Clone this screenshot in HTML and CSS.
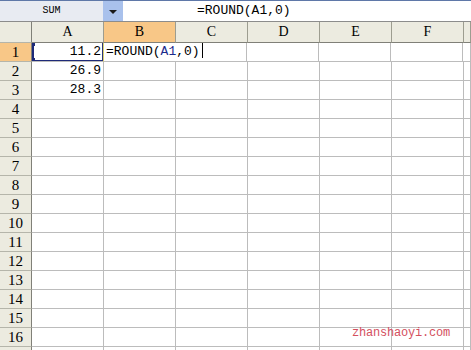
FILE: index.html
```html
<!DOCTYPE html>
<html lang="en">
<head>
    <meta charset="UTF-8">
    <title>ROUND</title>
    <link rel="stylesheet" href="styles.css">
</head>
<body>
    <div class="bar">
        <div class="namebox">SUM</div>
        <div class="drop"><span class="arrow"></span></div>
        <div class="formula">=ROUND(A1,0)</div>
    </div>
    <div class="sheet">
        <div class="row head">
            <div class="rh corner"></div><div class="ch">A</div><div class="ch sel">B</div><div class="ch">C</div><div class="ch">D</div><div class="ch">E</div><div class="ch">F</div><div class="ch last"></div>
        </div>
        <div class="row">
            <div class="rh sel">1</div>
            <div class="c num active">11.2</div>
            <div class="c edit">=ROUND(<span class="ref">A1</span>,0)<span class="caret"></span></div>
            <div class="c"></div><div class="c"></div><div class="c"></div><div class="c"></div><div class="c last"></div>
        </div>
        <div class="row"><div class="rh">2</div><div class="c num">26.9</div><div class="c"></div><div class="c"></div><div class="c"></div><div class="c"></div><div class="c"></div><div class="c last"></div></div>
        <div class="row"><div class="rh">3</div><div class="c num">28.3</div><div class="c"></div><div class="c"></div><div class="c"></div><div class="c"></div><div class="c"></div><div class="c last"></div></div>
        <div class="row"><div class="rh">4</div><div class="c"></div><div class="c"></div><div class="c"></div><div class="c"></div><div class="c"></div><div class="c"></div><div class="c last"></div></div>
        <div class="row"><div class="rh">5</div><div class="c"></div><div class="c"></div><div class="c"></div><div class="c"></div><div class="c"></div><div class="c"></div><div class="c last"></div></div>
        <div class="row"><div class="rh">6</div><div class="c"></div><div class="c"></div><div class="c"></div><div class="c"></div><div class="c"></div><div class="c"></div><div class="c last"></div></div>
        <div class="row"><div class="rh">7</div><div class="c"></div><div class="c"></div><div class="c"></div><div class="c"></div><div class="c"></div><div class="c"></div><div class="c last"></div></div>
        <div class="row"><div class="rh">8</div><div class="c"></div><div class="c"></div><div class="c"></div><div class="c"></div><div class="c"></div><div class="c"></div><div class="c last"></div></div>
        <div class="row"><div class="rh">9</div><div class="c"></div><div class="c"></div><div class="c"></div><div class="c"></div><div class="c"></div><div class="c"></div><div class="c last"></div></div>
        <div class="row"><div class="rh">10</div><div class="c"></div><div class="c"></div><div class="c"></div><div class="c"></div><div class="c"></div><div class="c"></div><div class="c last"></div></div>
        <div class="row"><div class="rh">11</div><div class="c"></div><div class="c"></div><div class="c"></div><div class="c"></div><div class="c"></div><div class="c"></div><div class="c last"></div></div>
        <div class="row"><div class="rh">12</div><div class="c"></div><div class="c"></div><div class="c"></div><div class="c"></div><div class="c"></div><div class="c"></div><div class="c last"></div></div>
        <div class="row"><div class="rh">13</div><div class="c"></div><div class="c"></div><div class="c"></div><div class="c"></div><div class="c"></div><div class="c"></div><div class="c last"></div></div>
        <div class="row"><div class="rh">14</div><div class="c"></div><div class="c"></div><div class="c"></div><div class="c"></div><div class="c"></div><div class="c"></div><div class="c last"></div></div>
        <div class="row"><div class="rh">15</div><div class="c"></div><div class="c"></div><div class="c"></div><div class="c"></div><div class="c"></div><div class="c"></div><div class="c last"></div></div>
        <div class="row"><div class="rh">16</div><div class="c"></div><div class="c"></div><div class="c"></div><div class="c"></div><div class="c"></div><div class="c"></div><div class="c last"></div></div>
        <div class="row"><div class="rh"></div><div class="c"></div><div class="c"></div><div class="c"></div><div class="c"></div><div class="c"></div><div class="c"></div><div class="c last"></div></div>
    </div>
    <div class="watermark">zhanshaoyi.com</div>
</body>
</html>
```

FILE: styles.css
```css
body {
    margin: 0;
    width: 471px;
    height: 350px;
    overflow: hidden;
    position: relative;
    background: #fff;
    font-family: "Liberation Mono", "DejaVu Sans Mono", monospace;
    color: #000;
}

/* formula bar */
.bar {
    display: flex;
    height: 20px;
    border-top: 1px solid #5f78a8;
    border-bottom: 1px solid #8c8c8c;
}

.namebox {
    width: 103px;
    background: #e8ebf2;
    font-size: 10px;
    line-height: 20px;
    text-align: center;
}

.drop {
    width: 20px;
    background: #a9c1ec;
    display: flex;
    align-items: center;
    justify-content: center;
}

.arrow {
    width: 0;
    height: 0;
    border-left: 4px solid transparent;
    border-right: 4px solid transparent;
    border-top: 4px solid #1a1a1a;
    margin-top: 2px;
}

.formula {
    flex: 1;
    padding-left: 74px;
    font-size: 13px;
    line-height: 20px;
}

/* grid */
.row {
    display: flex;
    height: 19px;
}

.rh,
.c,
.ch {
    box-sizing: border-box;
    height: 19px;
    border-right: 1px solid #bcbcbc;
    border-bottom: 1px solid #bcbcbc;
}

.c,
.ch {
    width: 72px;
    flex-shrink: 0;
}

.c.last,
.ch.last {
    flex: 1;
}

.head {
    height: 21px;
}

.ch,
.corner {
    height: 21px;
    background: #ecebe0;
    border-right: 1px solid #9d9d90;
    border-bottom: 1px solid #808078;
    font-family: "Liberation Serif", "DejaVu Serif", serif;
    font-size: 14px;
    line-height: 20px;
    text-align: center;
}

.rh {
    width: 32px;
    flex-shrink: 0;
    background: #ecebe0;
    border-right: 1px solid #808078;
    border-bottom: 1px solid #b5b5aa;
    font-family: "Liberation Serif", "DejaVu Serif", serif;
    font-size: 15px;
    line-height: 18px;
    text-align: center;
}

.corner {
    width: 32px;
    border-right: 1px solid #808078;
}

.sel {
    background: #f8c787;
}

.c {
    font-size: 13px;
    line-height: 18px;
    white-space: nowrap;
}

.num {
    text-align: right;
    padding-right: 2px;
}

.active {
    position: relative;
    box-shadow: inset 2px 0 0 #1e2a78, inset 0 -1px 0 #1e2a78, inset -1px 0 0 #2a3478;
}

.active::before,
.active::after {
    content: "";
    position: absolute;
    left: 0;
    width: 3px;
    height: 3px;
    background: #1e2a78;
}

.active::before {
    top: 0;
}

.active::after {
    bottom: 0;
}

.edit {
    position: relative;
    z-index: 1;
    width: 100px;
    margin-right: -28px;
    background: #fff;
    padding-left: 2px;
    border-right: none;
    border-left: 1px solid #d8d070;
    margin-left: -1px;
}

.ref {
    color: #1b2a8c;
}

.caret {
    display: inline-block;
    width: 1px;
    height: 15px;
    background: #000;
    vertical-align: -3px;
    margin-left: 2px;
}

.watermark {
    position: absolute;
    left: 352px;
    top: 326px;
    font-size: 12px;
    color: #d4505e;
    letter-spacing: -0.2px;
}
```
